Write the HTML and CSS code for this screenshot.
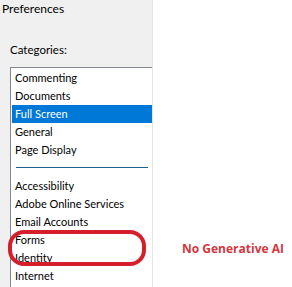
FILE: index.html
```html
<!DOCTYPE html>
<html lang="en">
<head>
    <meta charset="UTF-8">
    <meta name="viewport" content="width=device-width, initial-scale=1.0">
    <title>Preferences</title>
    <link rel="stylesheet" href="styles.css">
</head>
<body>

    <div class="sidebar">
        <div class="title">Preferences</div>
        <div class="label">Categories:</div>
        <ul class="listbox">
            <li>Commenting</li>
            <li>Documents</li>
            <li class="selected">Full Screen</li>
            <li>General</li>
            <li>Page Display</li>
            <li class="separator"></li>
            <li>Accessibility</li>
            <li>Adobe Online Services</li>
            <li>Email Accounts</li>
            <li>Forms</li>
            <li>Identity</li>
            <li>Internet</li>
        </ul>
        <!-- hand drawn marker around Forms / Identity -->
        <div class="marker"></div>
    </div>

    <div class="main">
        <p class="note">No Generative AI</p>
    </div>

</body>
</html>
```

FILE: styles.css
```css
html, body {
    margin: 0;
    padding: 0;
}
body {
    width: 292px;
    height: 287px;
    overflow: hidden;
    display: flex;
    background-color: #ffffff;
    font-family: Lato, "Open Sans", sans-serif;
    font-size: 11.5px;
    color: #000000;
}
.sidebar {
    position: relative;
    width: 152px;
    height: 287px;
    flex-shrink: 0;
    display: flex;
    flex-direction: column;
    background-color: #f0f0f0;
    border-right: 1px solid #e4e4e4;
}
.title {
    padding: 0 0 0 2px;
    line-height: 17px;
    font-size: 12px;
}
.label {
    margin-top: 24px;
    padding-left: 10px;
    line-height: 18px;
}
.listbox {
    flex: 1;
    overflow: hidden;
    list-style: none;
    margin: 8px 0 0 10px;
    padding: 1px 0 0 1px;
    background-color: #ffffff;
    border-top: 1px solid #828790;
    border-left: 1px solid #828790;
}
.listbox li {
    height: 18px;
    line-height: 18px;
    padding-left: 3px;
    font-size: 11px;
    white-space: nowrap;
}
.listbox li.selected {
    background-color: #0078d7;
    color: #ffffff;
}
.listbox li.separator {
    height: 1px;
    margin: 8px 4px 9px 4px;
    background-color: #1e5f8e;
}
.marker {
    position: absolute;
    left: 8px;
    top: 230px;
    width: 130px;
    height: 28px;
    border: 4px solid #d51f2b;
    border-radius: 16px;
}
.main {
    flex: 1;
    padding: 240px 0 0 29px;
}
.note {
    margin: 0;
    font-family: "Open Sans", sans-serif;
    font-weight: bold;
    font-size: 12px;
    color: #d2383f;
}
```
